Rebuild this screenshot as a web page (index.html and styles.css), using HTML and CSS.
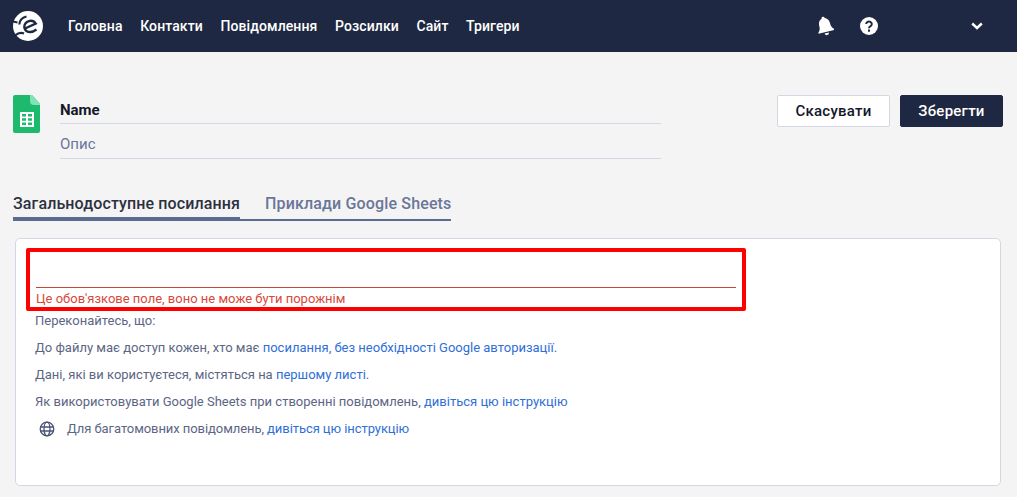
FILE: index.html
```html
<!DOCTYPE html>
<html lang="uk">
<head>
	<meta charset="UTF-8">
	<title>Google Sheets</title>
	<link rel="stylesheet" href="styles.css">
</head>
<body>
	<header class="topbar">
		<svg class="logo" viewBox="0 0 30 30" width="30" height="30">
			<circle cx="15" cy="15" r="15" fill="#fff"/>
			<g fill="none" stroke="#1f2842">
				<path d="M12 17.500 22.800 12.600A6.300 6.300 0 0 0 11.300 15.800C11.800 21 17.500 23 23.500 18.500" stroke-width="2.400"/>
				<path d="M13.500 5.500C9.500 6.500 6.500 9.500 6.300 13.500" stroke-width="2.200"/>
				<path d="M-.5 10.500 4.500 11.500" stroke-width="2"/>
				<path d="M2 24.500C5 22 8 21 11 22.500" stroke-width="2.200"/>
			</g>
		</svg>
		<nav class="menu">
			<a href="#">Головна</a>
			<a href="#">Контакти</a>
			<a href="#">Повідомлення</a>
			<a href="#">Розсилки</a>
			<a href="#">Сайт</a>
			<a href="#">Тригери</a>
		</nav>
		<div class="topbar-right">
			<svg class="bell" viewBox="0 0 18 20" width="18" height="20">
				<g transform="rotate(-14 9 10)" fill="#fff">
					<path d="M9 .5a1.500 1.500 0 0 1 1.500 1.700C13 3 14.500 5.200 14.500 8c0 4 1 5.500 2.500 6.800v1.200H1v-1.200C2.500 13.500 3.500 12 3.500 8c0-2.800 1.500-5 4-5.800A1.500 1.500 0 0 1 9 .5z"/>
					<path d="M6.800 17.200h4.400a2.200 2.200 0 0 1-4.400 0z"/>
				</g>
			</svg>
			<svg class="help" viewBox="0 0 18 18" width="18" height="18">
				<circle cx="9" cy="9" r="9" fill="#fff"/>
				<path d="M6.200 7a2.800 2.500 0 1 1 4.400 2.100c-1 .7-1.600 1-1.600 2.200" fill="none" stroke="#1f2842" stroke-width="2"/>
				<rect x="8" y="12.500" width="2" height="2.200" fill="#1f2842"/>
			</svg>
			<svg class="chevron" viewBox="0 0 12 8" width="12" height="8">
				<path d="M1.200 1.500 6 6l4.800-4.500" fill="none" stroke="#fff" stroke-width="2.400"/>
			</svg>
		</div>
	</header>

	<section class="head">
		<svg class="sheet-icon" viewBox="0 0 27 38" width="27" height="38">
			<path d="M2 0h17l8 9v27a2 2 0 0 1-2 2H2a2 2 0 0 1-2-2V2a2 2 0 0 1 2-2z" fill="#1dba6e"/>
			<path d="M17 0h2l8 9v1h-6a4 4 0 0 1-4-4z" fill="#7fe3b4"/>
			<path d="M7 17h14v15H7zM9 19v2.500h4V19zm6 0v2.500h4V19zm-6 4.200v2.500h4v-2.500zm6 0v2.500h4v-2.500zm-6 4.300V30h4v-2.500zm6 0V30h4v-2.500z" fill="#fff" fill-rule="evenodd"/>
		</svg>
		<div class="head-fields">
			<div class="field-name">Name</div>
			<div class="field-desc">Опис</div>
		</div>
		<div class="head-actions">
			<button class="btn btn-light">Скасувати</button>
			<button class="btn btn-dark">Зберегти</button>
		</div>
	</section>

	<div class="tabs">
		<a class="tab active" href="#">Загальнодоступне посилання</a>
		<a class="tab" href="#">Приклади Google Sheets</a>
	</div>

	<section class="card">
		<div class="url-box">
			<div class="url-input"></div>
			<div class="url-error">Це обов'язкове поле, воно не може бути порожнім</div>
		</div>
		<p class="note note-first">Переконайтесь, що:</p>
		<p class="note">До файлу має доступ кожен, хто має <a href="#">посилання, без необхідності Google авторизації.</a></p>
		<p class="note">Дані, які ви користуєтеся, містяться на <a href="#">першому листі.</a></p>
		<p class="note">Як використовувати Google Sheets при створенні повідомлень, <a href="#">дивіться цю інструкцію</a></p>
		<p class="note note-lang">
			<svg class="globe" viewBox="0 0 16 16" width="16" height="16">
				<g fill="none" stroke="#4a5478" stroke-width="1.300">
					<circle cx="8" cy="8" r="6.800"/>
					<ellipse cx="8" cy="8" rx="3" ry="6.800"/>
					<path d="M1.500 6h13M1.500 10h13"/>
				</g>
			</svg>
			<span>Для багатомовних повідомлень, <a href="#">дивіться цю інструкцію</a></span>
		</p>
	</section>
</body>
</html>
```

FILE: styles.css
```css
*{
	box-sizing:border-box;
}
body{
	margin:0;
	background:#f4f4f4;
	font-family:Roboto,"Liberation Sans",sans-serif;
	color:#1f2842;
}
a{
	text-decoration:none;
}
.topbar{
	display:flex;
	align-items:center;
	height:52px;
	padding-left:13px;
	background:#1f2842;
}
.menu{
	display:flex;
	gap:17.6px;
	margin-left:25px;
}
.menu a{
	color:#fff;
	font-size:14px;
	font-weight:500;
	letter-spacing:.1px;
}
.topbar-right{
	display:flex;
	align-items:center;
	margin-left:auto;
	padding-right:34px;
}
.help{
	margin-left:26px;
}
.chevron{
	margin-left:93px;
}
.head{
	display:flex;
	align-items:flex-start;
	padding:43px 14px 0 13px;
}
.head-fields{
	width:601px;
	margin-left:20px;
}
.field-name{
	height:29px;
	padding-top:6px;
	border-bottom:1px solid #d3d7e3;
	font-size:15px;
	font-weight:700;
	color:#14182a;
}
.field-desc{
	height:35px;
	padding-top:11px;
	border-bottom:1px solid #d3d7e3;
	font-size:15px;
	color:#6a7699;
}
.head-actions{
	display:flex;
	gap:10px;
	margin-left:auto;
}
.btn{
	height:32px;
	border-radius:2px;
	font-family:inherit;
	font-size:15px;
	font-weight:500;
	letter-spacing:.25px;
}
.btn-light{
	width:113px;
	border:1px solid #d3d7e3;
	background:#fff;
	color:#14182a;
}
.btn-dark{
	width:103px;
	border:1px solid #1f2842;
	background:#1f2842;
	color:#fff;
}
.tabs{
	display:flex;
	align-items:flex-end;
	margin:35px 0 0 13px;
}
.tab{
	padding-bottom:6px;
	font-size:16px;
	font-weight:500;
	letter-spacing:.15px;
	color:#6a7699;
	border-bottom:2px solid #5c6b91;
}
.tab.active{
	color:#2c3040;
	border-bottom-width:4px;
	padding-bottom:4px;
	letter-spacing:.12px;
}
.tab + .tab{
	padding-left:25px;
}
.card{
	height:248px;
	margin:17px 16px 0 15px;
	padding:9px 10px 0;
	background:#fff;
	border:1px solid #d3d7e3;
	border-radius:5px;
}
.url-box{
	width:720px;
	height:63px;
	padding:0 6px;
	border:4px solid #f00;
	border-radius:2px;
}
.url-input{
	height:36px;
	border-bottom:1px solid #c9452f;
}
.url-error{
	padding-top:3px;
	font-size:13px;
	color:#d8483a;
}
.note{
	margin:0 0 10px 9px;
	font-size:13px;
	line-height:17px;
	color:#5c6684;
}
.note-first{
	margin-top:1px;
}
.note a{
	color:#2f6fd6;
}
.note-lang{
	display:flex;
	align-items:center;
	gap:12px;
	padding-left:4px;
	letter-spacing:-.07px;
}
```
